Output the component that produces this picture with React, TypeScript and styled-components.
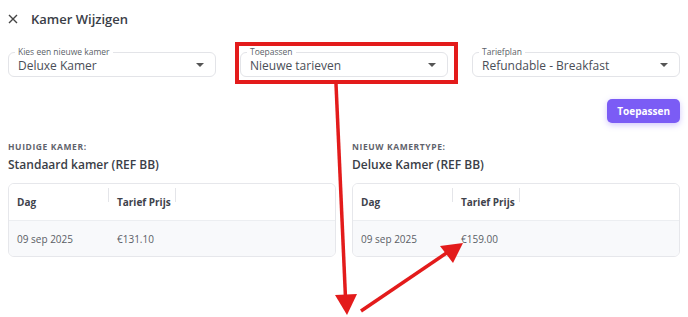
import React from "react";
import styled, { createGlobalStyle } from "styled-components";

const Global = createGlobalStyle`
  html, body { margin: 0; padding: 0; background: #fff; }
  body { font-family: "Open Sans", "Liberation Sans", sans-serif; color: #3b3f48; }
  * { box-sizing: border-box; }
`;

const Page = styled.div`
  position: relative;
  width: 688px;
  height: 317px;
  overflow: hidden;
  padding: 8px 8px 0 8px;
`;

const Header = styled.div`
  display: flex;
  align-items: center;
  gap: 13px;
  height: 22px;
`;

const CloseBtn = styled.span`
  display: flex;
  width: 10px;
  height: 10px;
  color: #444;
`;

const Title = styled.h1`
  margin: 0;
  font-size: 13px;
  font-weight: 600;
  color: #3a3e47;
`;

const SelectRow = styled.div`
  display: grid;
  grid-template-columns: repeat(3, 1fr);
  gap: 24px;
  margin-top: 22px;
`;

const Field = styled.div`
  position: relative;
  height: 25px;
  border: 1px solid #e3e4e8;
  border-radius: 6px;
  display: flex;
  align-items: center;
  padding: 0 8px 0 9px;
`;

const FieldLabel = styled.span`
  position: absolute;
  top: -6px;
  left: 6px;
  padding: 0 3px;
  background: #fff;
  font-size: 8.5px;
  line-height: 10px;
  color: #5b5f68;
`;

const FieldValue = styled.span`
  flex: 1;
  font-size: 12px;
  color: #4a4e57;
  padding-top: 2px;
`;

const Caret = styled.span`
  width: 0;
  height: 0;
  border-left: 4px solid transparent;
  border-right: 4px solid transparent;
  border-top: 4px solid #555;
  margin-right: 3px;
`;

const ActionRow = styled.div`
  display: flex;
  justify-content: flex-end;
  margin-top: 22px;
`;

const Button = styled.button`
  height: 24px;
  padding: 0 10px;
  border: none;
  border-radius: 5px;
  background: #7b5cf5;
  color: #fff;
  font-family: inherit;
  font-size: 10px;
  font-weight: 700;
  box-shadow: 0 2px 6px rgba(123, 92, 245, 0.35);
`;

const Compare = styled.div`
  display: grid;
  grid-template-columns: 1fr 1fr;
  gap: 16px;
  margin-top: 18px;
`;

const Column = styled.div`
  display: flex;
  flex-direction: column;
`;

const Eyebrow = styled.div`
  font-size: 8.5px;
  font-weight: 700;
  letter-spacing: 0.6px;
  color: #5f636c;
  text-transform: uppercase;
`;

const RoomName = styled.div`
  margin-top: 4px;
  font-size: 12px;
  font-weight: 600;
  color: #3a3e47;
`;

const Table = styled.div`
  margin-top: 10px;
  border: 1px solid #e6e7eb;
  border-radius: 6px;
  overflow: hidden;
`;

const Row = styled.div<{ $head?: boolean }>`
  display: grid;
  grid-template-columns: 100px 67px 1fr;
  align-items: center;
  height: 36px;
  background: ${(p) => (p.$head ? "#fff" : "#f8f9fb")};
  border-top: ${(p) => (p.$head ? "none" : "1px solid #eceef1")};
`;

const Cell = styled.div<{ $head?: boolean; $sep?: boolean }>`
  position: relative;
  padding: 0 8px;
  font-size: 10px;
  font-weight: ${(p) => (p.$head ? 700 : 400)};
  color: ${(p) => (p.$head ? "#3e424b" : "#5a5e66")};
  white-space: nowrap;
  ${(p) =>
    p.$sep
      ? `&::after { content: ""; position: absolute; right: 0; top: -7px; height: 14px; width: 1px; background: #e4e5e9; }`
      : ""}
`;

const Overlay = styled.svg`
  position: absolute;
  left: 0;
  top: 0;
  pointer-events: none;
`;

function Select({ label, value }: { label: string; value: string }) {
  return (
    <Field>
      <FieldLabel>{label}</FieldLabel>
      <FieldValue>{value}</FieldValue>
      <Caret />
    </Field>
  );
}

function RateTable({ date, price }: { date: string; price: string }) {
  return (
    <Table>
      <Row $head>
        <Cell $head $sep>Dag</Cell>
        <Cell $head $sep>Tarief Prijs</Cell>
        <Cell />
      </Row>
      <Row>
        <Cell>{date}</Cell>
        <Cell>{price}</Cell>
        <Cell />
      </Row>
    </Table>
  );
}

export default function App() {
  return (
    <>
      <Global />
      <Page>
        <Header>
          <CloseBtn>
            <svg width="10" height="10" viewBox="0 0 10 10">
              <path d="M1 1 L9 9 M9 1 L1 9" stroke="#444" strokeWidth="1.4" />
            </svg>
          </CloseBtn>
          <Title>Kamer Wijzigen</Title>
        </Header>
        <SelectRow>
          <Select label="Kies een nieuwe kamer" value="Deluxe Kamer" />
          <Select label="Toepassen" value="Nieuwe tarieven" />
          <Select label="Tariefplan" value="Refundable - Breakfast" />
        </SelectRow>
        <ActionRow>
          <Button>Toepassen</Button>
        </ActionRow>
        <Compare>
          <Column>
            <Eyebrow>Huidige kamer:</Eyebrow>
            <RoomName>Standaard kamer (REF BB)</RoomName>
            <RateTable date="09 sep 2025" price="€131.10" />
          </Column>
          <Column>
            <Eyebrow>Nieuw kamertype:</Eyebrow>
            <RoomName>Deluxe Kamer (REF BB)</RoomName>
            <RateTable date="09 sep 2025" price="€159.00" />
          </Column>
        </Compare>
        <Overlay width="688" height="317" viewBox="0 0 688 317">
          <rect x="237" y="44" width="219" height="38" fill="none" stroke="#e31b1b" strokeWidth="4" />
          <line x1="336" y1="84" x2="345.5" y2="298" stroke="#e31b1b" strokeWidth="3.5" />
          <polygon points="335,295 357,294 347,315" fill="#e31b1b" />
          <line x1="361" y1="311" x2="448" y2="252" stroke="#e31b1b" strokeWidth="3.5" />
          <polygon points="440,246 453,263 463,243" fill="#e31b1b" />
        </Overlay>
      </Page>
    </>
  );
}
